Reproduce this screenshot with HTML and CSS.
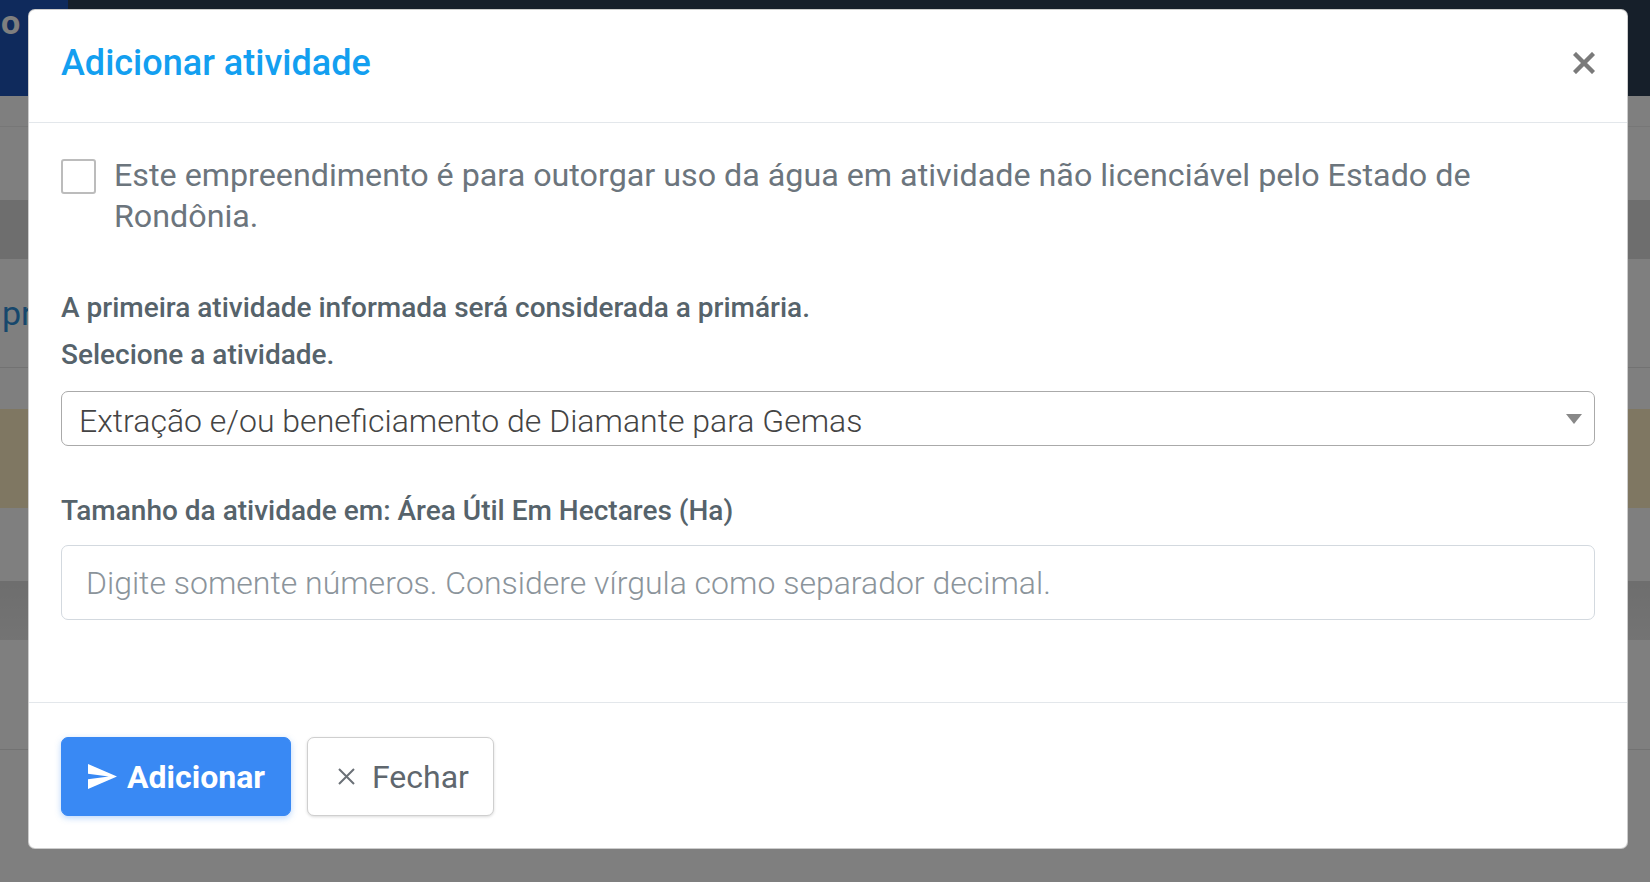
FILE: index.html
```html
<!DOCTYPE html>
<html lang="pt-BR">
<head>
<meta charset="utf-8">
<title>Adicionar atividade</title>
<link rel="stylesheet" href="styles.css">
</head>
<body>
<div class="page">
  <header class="navbar">
    <div class="brand"><span class="brand-text">o</span></div>
    <div class="nav-fill"></div>
  </header>
  <div class="band band-top"></div>
  <div class="band band-white b73"></div>
  <div class="band band-grey"></div>
  <div class="band band-title"><span class="page-title">pr</span></div>
  <div class="band band-white b41"></div>
  <div class="band band-alert"></div>
  <div class="band band-white b73"></div>
  <div class="band band-grey2"></div>
  <div class="band band-line"></div>
  <div class="band band-rest"></div>
</div>
<div class="backdrop"></div>

<div class="modal" role="dialog">
  <div class="modal-header">
    <h5 class="modal-title">Adicionar atividade</h5>
    <button class="close" type="button" aria-label="Fechar">
      <svg width="22" height="22" viewBox="0 0 22 22"><path d="M3 3L19 19M19 3L3 19" stroke="#7a7a7a" stroke-width="4.4" stroke-linecap="square" fill="none"/></svg>
    </button>
  </div>
  <div class="modal-body">
    <div class="check-row">
      <span class="checkbox"></span>
      <span class="check-text">Este empreendimento é para outorgar uso da água em atividade não licenciável pelo Estado de Rondônia.</span>
    </div>
    <p class="label label-first">A primeira atividade informada será considerada a primária.</p>
    <p class="label label-select">Selecione a atividade.</p>
    <div class="select">
      <span class="select-text">Extração e/ou beneficiamento de Diamante para Gemas</span>
      <span class="select-arrow"></span>
    </div>
    <p class="label label-size">Tamanho da atividade em: Área Útil Em Hectares (Ha)</p>
    <input class="input" type="text" placeholder="Digite somente números. Considere vírgula como separador decimal.">
  </div>
  <div class="modal-footer">
    <button class="btn btn-primary" type="button">
      <svg class="icon-send" width="29" height="25" viewBox="2 3 21 18"><path d="M2.01 21L23 12 2.01 3 2 10l15 2-15 2z" fill="#fff"/></svg>
      <span>Adicionar</span>
    </button>
    <button class="btn btn-default" type="button">
      <svg class="icon-x" width="19" height="19" viewBox="0 0 19 19"><path d="M2 2L17 17M17 2L2 17" stroke="#6b7177" stroke-width="2" fill="none"/></svg>
      <span>Fechar</span>
    </button>
  </div>
</div>
</body>
</html>
```

FILE: styles.css
```css
html, body {
  margin: 0;
  padding: 0;
}
body {
  width: 1650px;
  height: 882px;
  overflow: hidden;
  position: relative;
  font-family: Roboto, "Liberation Sans", Arial, sans-serif;
  background: #ffffff;
}

/* page behind the modal */
.page {
  display: flex;
  flex-direction: column;
  height: 882px;
}
.navbar {
  display: flex;
  height: 96px;
  flex: none;
}
.brand {
  width: 68px;
  background: #1e54b8;
  overflow: hidden;
}
.brand-text {
  display: block;
  margin: 2px 0 0 1px;
  font-size: 34px;
  font-weight: 700;
  color: #ffffff;
  line-height: 40px;
}
.nav-fill {
  flex: 1;
  background: #2c3e54;
}
.band { flex: none; background: #ffffff; }
.band-top { height: 30px; border-bottom: 1px solid #eeeeee; }
.b73 { height: 73px; }
.b41 { height: 41px; }
.band-grey { height: 59px; background: #dcdcdc; }
.band-title {
  height: 108px;
  border-bottom: 1px solid #e4e4e4;
  display: flex;
  align-items: center;
}
.page-title {
  margin-left: 2px;
  font-size: 34px;
  color: #2f8fd8;
}
.band-alert { height: 99px; background: #feeec4; }
.band-grey2 {
  height: 59px;
  background: linear-gradient(#dcdcdc, #e8e8e8);
}
.band-line { height: 109px; border-bottom: 1px solid #e4e4e4; }
.band-rest { flex: 1; }

.backdrop {
  position: absolute;
  inset: 0;
  background: rgba(0, 0, 0, 0.5);
}

/* modal */
.modal {
  position: absolute;
  left: 28px;
  top: 9px;
  width: 1600px;
  box-sizing: border-box;
  background: #ffffff;
  border: 1px solid rgba(0, 0, 0, 0.2);
  border-radius: 7px;
  display: flex;
  flex-direction: column;
}
.modal-header {
  display: flex;
  align-items: center;
  justify-content: space-between;
  padding: 27px 32px 33px;
  border-bottom: 1px solid #e3e7eb;
}
.modal-title {
  margin: 0;
  font-size: 36px;
  line-height: 52px;
  font-weight: 500;
  color: #139ff0;
}
.close {
  border: 0;
  background: none;
  padding: 0;
  margin: 0;
  width: 22px;
  height: 22px;
  display: flex;
}

.modal-body {
  padding: 32px 32px 82px;
  display: flex;
  flex-direction: column;
}
.check-row {
  display: flex;
  align-items: flex-start;
  gap: 18px;
}
.checkbox {
  flex: none;
  width: 35px;
  height: 35px;
  box-sizing: border-box;
  border: 2px solid #bcbcbc;
  border-radius: 3px;
  margin-top: 4px;
}
.check-text {
  font-size: 32.25px;
  line-height: 41px;
  color: #6c757d;
}
.label {
  margin: 0;
  font-size: 28px;
  line-height: 42px;
  font-weight: 500;
  color: #56636b;
}
.label-first { margin-top: 50px; }
.label-select { margin-top: 5px; }
.select {
  margin-top: 15px;
  height: 55px;
  box-sizing: border-box;
  border: 1px solid #aaaaaa;
  border-radius: 7px;
  display: flex;
  align-items: center;
  justify-content: space-between;
  padding: 4px 12px 0 17px;
}
.select-text {
  font-size: 32px;
  font-weight: 300;
  color: #444444;
  line-height: 40px;
}
.select-arrow {
  width: 0;
  height: 0;
  margin-top: -4px;
  border-left: 8px solid transparent;
  border-right: 8px solid transparent;
  border-top: 10px solid #888888;
}
.label-size { margin-top: 44px; }
.input {
  margin-top: 13px;
  height: 75px;
  box-sizing: border-box;
  border: 1px solid #d3d9df;
  border-radius: 7px;
  padding: 0 24px;
  font-family: inherit;
  font-size: 32px;
  font-weight: 300;
  color: #495057;
  outline: none;
}
.input::placeholder {
  color: #8b949b;
  opacity: 1;
}

.modal-footer {
  border-top: 1px solid #e3e7eb;
  padding: 34px 32px 32px;
  display: flex;
  gap: 16px;
}
.btn {
  height: 79px;
  box-sizing: border-box;
  border-radius: 7px;
  display: flex;
  align-items: center;
  font-family: inherit;
  font-size: 32px;
  cursor: pointer;
}
.btn-primary {
  background: #3989f4;
  border: 1px solid #3989f4;
  color: #ffffff;
  font-weight: 700;
  padding: 0 25px 0 26px;
  gap: 10px;
  box-shadow: 0 2px 6px rgba(57, 137, 244, 0.35);
}
.btn-default {
  background: #ffffff;
  border: 1px solid #cfcfcf;
  color: #5f676e;
  font-weight: 400;
  padding: 0 24px 0 29px;
  gap: 16px;
  box-shadow: 0 1px 3px rgba(0, 0, 0, 0.15);
}
.icon-send, .icon-x { flex: none; }
```
